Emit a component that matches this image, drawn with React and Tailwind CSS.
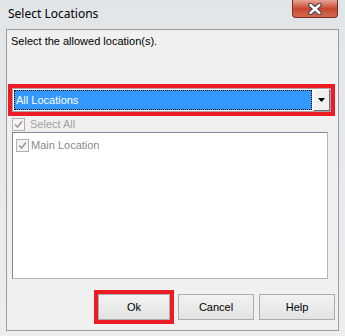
import React from "react";

function Check() {
  return (
    <span className="flex h-[13px] w-[13px] shrink-0 items-center justify-center border border-[#b1b1b1] bg-[#f4f4f4]">
      <svg width="9" height="9" viewBox="0 0 9 9">
        <path d="M1 4.5 L3.5 7 L8 1.5" fill="none" stroke="#9a9a9a" strokeWidth="1.6" />
      </svg>
    </span>
  );
}

function Btn({ children, className = "" }) {
  return (
    <div
      className={
        "flex h-[26px] items-center justify-center border border-[#acacac] bg-gradient-to-b from-[#f2f2f2] to-[#e3e3e3] text-[11px] text-black " +
        className
      }
    >
      {children}
    </div>
  );
}

export default function App() {
  return (
    <div
      className="relative h-[336px] w-[345px] overflow-hidden bg-gradient-to-b from-[#e2e5e8] to-[#eceef0]"
      style={{ fontFamily: '"Liberation Sans", Arial, sans-serif' }}
    >
      {/* title bar */}
      <div className="flex h-[29px] items-start justify-between">
        <div
          className="pl-[8px] pt-[6px] text-[12px] leading-[16px] text-black"
          style={{ fontFamily: '"Noto Sans", "Open Sans", sans-serif' }}
        >
          Select Locations
        </div>
        <div className="mr-[7px] flex h-[18px] w-[46px] items-center justify-center rounded-b-[4px] border border-t-0 border-[#7a2a1e] bg-gradient-to-b from-[#e6a594] via-[#c8472f] to-[#d66a52]">
          <svg width="16" height="12" viewBox="0 0 16 12">
            <path d="M3.5 2 L12.5 10 M12.5 2 L3.5 10" stroke="#3d3d4a" strokeWidth="4.4" strokeLinecap="round" />
            <path d="M3.5 2 L12.5 10 M12.5 2 L3.5 10" stroke="#ffffff" strokeWidth="2.4" strokeLinecap="round" />
          </svg>
        </div>
      </div>

      {/* client area */}
      <div className="mx-[6px] flex h-[302px] flex-col border border-[#9c9c9c] bg-[#f0f0f0]">
        <div className="pl-[4px] pt-[5px] text-[11px] leading-[13px] text-black">
          Select the allowed location(s).
        </div>

        {/* red highlighted combobox */}
        <div className="ml-[1px] mt-[36px] h-[32px] w-[327px] border-[4px] border-[#ed1c24]">
          <div className="flex h-full w-full border border-[#a5a5a5] bg-white">
            <div className="m-[1px] flex flex-1 items-center border border-dotted border-[#000] bg-[#3399ff] pl-[1px] text-[11px] text-white">
              All Locations
            </div>
            <div className="flex w-[17px] items-center justify-center border border-b-[#6d6d6d] border-l-[#ffffff] border-r-[#6d6d6d] border-t-[#ffffff] bg-[#f0f0f0]">
              <svg width="8" height="4" viewBox="0 0 8 4">
                <path d="M0 0 H7 L3.5 4 Z" fill="#000" />
              </svg>
            </div>
          </div>
        </div>

        {/* select all */}
        <div className="ml-[5px] mt-[1px] flex h-[14px] items-center gap-[5px] text-[11px] text-[#a0a0a0]">
          <Check />
          <span>Select All</span>
        </div>

        {/* list */}
        <div className="ml-[5px] mt-[1px] h-[147px] w-[316px] border border-[#b5b5b5] border-l-[#828790] border-t-[#828790] bg-white pl-[3px] pt-[4px]">
          <div className="flex items-center gap-[2px] text-[11px] text-[#8a8a8a]">
            <Check />
            <span>Main Location</span>
          </div>
        </div>

        {/* buttons */}
        <div className="mt-[11px] flex items-start pl-[87px]">
          <div className="h-[34px] w-[80px] border-[4px] border-[#ed1c24]">
            <Btn className="h-full w-full">Ok</Btn>
          </div>
          <Btn className="ml-[4px] mt-[4px] w-[76px]">Cancel</Btn>
          <Btn className="ml-[5px] mt-[4px] w-[76px]">Help</Btn>
        </div>
      </div>
    </div>
  );
}
